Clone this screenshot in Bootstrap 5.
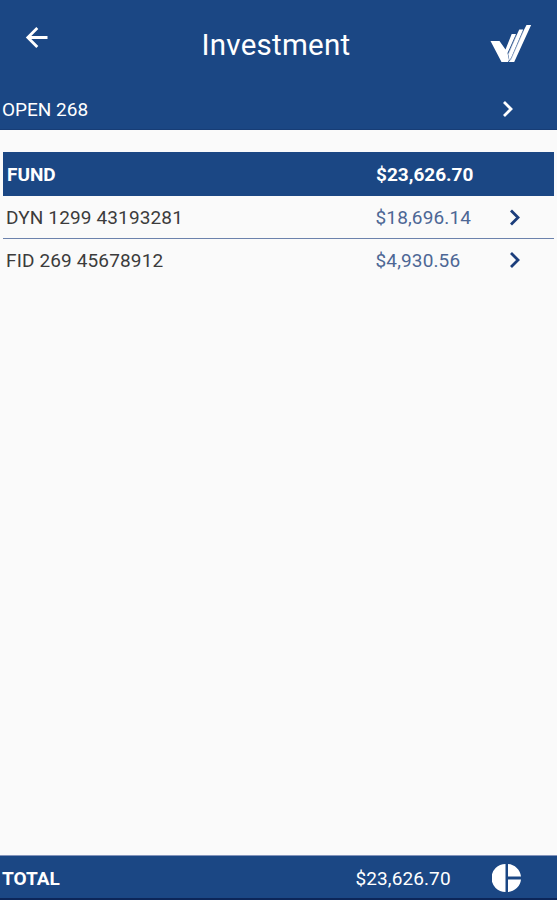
<!DOCTYPE html>
<html lang="en">
<head>
<meta charset="utf-8">
<meta name="viewport" content="width=device-width, initial-scale=1">
<title>Investment</title>
<link rel="stylesheet" href="https://cdn.jsdelivr.net/npm/bootstrap@5.3.0/dist/css/bootstrap.min.css">
<style>
:root { --brand: #1b4784; }
body { background: #fafafa; font-family: Roboto, sans-serif; font-size: 19px; line-height: 24px; color: #3c3c3c; }
.bg-brand { background: var(--brand); }
.app-bar { height: 88px; padding: 1px 25px 0 24px; }
.app-bar h1 { font-size: 29.5px; line-height: 36px; letter-spacing: .25px; margin-left: 13px !important; }
.account-bar { height: 42px; padding: 2px 42px 0 2px; border-bottom: 1px solid #173d76; }
.fund-list { margin: 22px 3px 0; }
.fund-row { height: 43px; padding: 1px 29px 0 3px; border-bottom: 1px solid #6c82ac; letter-spacing: .14px; }
.fund-row:last-child { border-bottom: 0; }
.fund-head { height: 44px; border-bottom: 0; padding: 2px 28px 0 4px; letter-spacing: 0; }
.amount { width: 129.500px; flex: none; color: #4d6795; }
.fund-head .amount { color: #fff; width: 150px; }
.total-bar { height: 45px; padding: 3px 35px 0 2px; border-top: 1px solid #8394bb; border-bottom: 2px solid #0c2659; }
.total-amount { width: 136.500px; letter-spacing: .1px; }
</style>
</head>
<body>
<div class="d-flex flex-column vh-100 overflow-hidden">
  <header class="app-bar bg-brand text-white d-flex align-items-center justify-content-between">
    <svg class="mb-3" width="25" height="24" viewBox="0 0 25 24" fill="none" stroke="#fff" stroke-width="2.8"><path d="M23.500 12.500H4M13.3 3 3.800 12.500 13.3 22"/></svg>
    <h1 class="fw-normal m-0">Investment</h1>
    <svg width="42" height="40" viewBox="0 0 42 40" fill="#fff"><path d="M.5 16H9.500L15.500 24.500 21.700 9H26L17.500 28 19 35 18 37H11.500z"/><path d="M26 11.500 29.300 4.500H33.200L21.500 32 19.500 35.500 18.200 29z"/><path d="M33.200 6.500 36.500 0 41.500-.8 24.200 37H18.800L21.500 33z"/><path d="M26.500 10 18.500 29M33.500 6 20.500 35.500" fill="none" stroke="#a5b5d0" stroke-width=".5"/></svg>
  </header>
  <div class="account-bar bg-brand text-white d-flex align-items-center justify-content-between">
    <span>OPEN 268</span>
    <svg class="mb-1" width="14" height="20" viewBox="0 0 14 20" fill="none" stroke="#fff" stroke-width="2.8"><path d="m3 4 7 7-7 7"/></svg>
  </div>
  <main class="flex-grow-1">
    <div class="fund-list">
      <div class="fund-row fund-head bg-brand text-white fw-bold d-flex align-items-center">
        <span class="flex-grow-1">FUND</span><span class="amount">$23,626.70</span>
      </div>
      <div class="fund-row d-flex align-items-center">
        <span class="flex-grow-1">DYN 1299 43193281</span><span class="amount">$18,696.14</span>
        <svg width="20" height="20" viewBox="0 0 20 20" fill="none" stroke="#1b3d7b" stroke-width="2.800"><path d="m6 2.500 7 7-7 7"/></svg>
      </div>
      <div class="fund-row d-flex align-items-center">
        <span class="flex-grow-1">FID 269 45678912</span><span class="amount">$4,930.56</span>
        <svg width="20" height="20" viewBox="0 0 20 20" fill="none" stroke="#1b3d7b" stroke-width="2.800"><path d="m6 2 7 7-7 7"/></svg>
      </div>
    </div>
  </main>
  <footer class="total-bar bg-brand text-white d-flex align-items-center">
    <span class="fw-bold flex-grow-1">TOTAL</span><span class="total-amount">$23,626.70</span>
    <svg width="30" height="30" viewBox="0 1 30 30" fill="#fff"><path d="M13.500 1a14 14 0 0 0 0 28zM16 1a14 14 0 0 1 13 12.500H16zM16 16.500h13A14 14 0 0 1 16 29z"/></svg>
  </footer>
</div>
<script src="https://cdn.jsdelivr.net/npm/bootstrap@5.3.0/dist/js/bootstrap.bundle.min.js"></script>
</body>
</html>
